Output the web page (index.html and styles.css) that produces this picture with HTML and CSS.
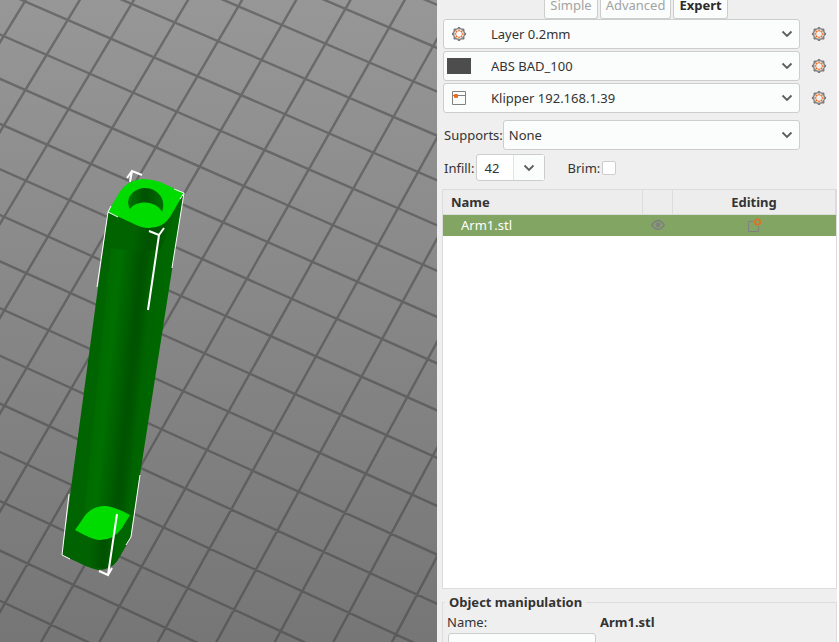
FILE: index.html
```html
<!DOCTYPE html>
<html lang="en">
<head>
<meta charset="utf-8">
<title>Plater</title>
<link rel="stylesheet" href="styles.css">
</head>
<body>
<svg class="symbols" aria-hidden="true">
  <symbol id="gear" viewBox="0 0 16 16">
    <g fill="none">
      <circle cx="8" cy="8" r="5.5" stroke="#8a8a8a" stroke-width="1.5"/>
      <circle cx="8" cy="8" r="6.3" stroke="#7c7c7c" stroke-width="1.6" pathLength="80" stroke-dasharray="5 5" stroke-dashoffset="2.5"/>
      <circle cx="8" cy="8" r="3.3" stroke="#f29a68" stroke-width="1"/>
      <circle cx="8" cy="8" r="3.6" stroke="#ed6b21" stroke-width="1.3" pathLength="80" stroke-dasharray="5 5" stroke-dashoffset="2.5"/>
    </g>
  </symbol>
  <symbol id="printer" viewBox="0 0 16 16">
    <path d="M1.5 1.5h13v13h-13zM1.5 5.5h13" fill="none" stroke="#808080"/>
    <rect x="3" y="4" width="4" height="4" rx="1" fill="#ed6b21"/>
  </symbol>
  <symbol id="chevron" viewBox="0 0 12 12">
    <path d="M1.5 3.5 6 8 10.5 3.5" fill="none" stroke="#5c5c5c" stroke-width="1.8"/>
  </symbol>
</svg>
<div class="app">
  <main class="viewport">
    <svg class="scene" viewBox="0 0 437 642" preserveAspectRatio="xMinYMin slice" role="img" aria-label="3D view of Arm1.stl">
      <defs>
        <linearGradient id="side" gradientUnits="userSpaceOnUse" x1="87" y1="380" x2="157" y2="387">
          <stop offset="0" stop-color="#006400"/><stop offset=".13" stop-color="#006400"/>
          <stop offset=".17" stop-color="#006c00"/><stop offset=".3" stop-color="#006f00"/>
          <stop offset=".6" stop-color="#005300"/><stop offset=".68" stop-color="#005700"/>
          <stop offset=".78" stop-color="#006400"/><stop offset="1" stop-color="#006800"/>
        </linearGradient>
        <linearGradient id="corner" gradientUnits="userSpaceOnUse" x1="108" y1="220" x2="184" y2="230">
          <stop offset="0" stop-color="#006300"/><stop offset=".35" stop-color="#006300"/>
          <stop offset=".55" stop-color="#005300"/><stop offset=".7" stop-color="#005700"/><stop offset=".85" stop-color="#006600"/>
          <stop offset="1" stop-color="#006a00"/>
        </linearGradient>
        <linearGradient id="base" gradientUnits="userSpaceOnUse" x1="64" y1="545" x2="131" y2="550">
          <stop offset="0" stop-color="#006200"/><stop offset=".4" stop-color="#006200"/>
          <stop offset=".6" stop-color="#005000"/><stop offset=".8" stop-color="#006600"/>
          <stop offset="1" stop-color="#006800"/>
        </linearGradient>
        <linearGradient id="bore" x1="0" x2="1">
          <stop offset="0" stop-color="#007500"/><stop offset=".5" stop-color="#005000"/><stop offset="1" stop-color="#007000"/>
        </linearGradient>
      </defs>
      <path id="bed-grid" class="bed-grid"/>
      <g class="box-edge">
        <path d="M127 178 132 171 142 175M132 171 130 182"/>
      </g>
      <path fill="url(#side)" d="M108 213 62 555 75 560Q88 568 98 570 110 570 117 561L130 539 184 193 150 200Z"/>
      <path fill="url(#corner)" d="M108 213 104 247 140 252 161 249 184 193 150 200Z"/>
      <path fill="url(#base)" d="M66 525 62 555 86 566Q99 571 110 567 115 565 119 558L130 538 134 514 129 516 75 530Z"/>
      <path fill="#00dc00" d="M108 212 119 193Q127 180 143 179 151 179 160 182L184 193 170 217Q163 228 149 228 141 228 132 223Z"/>
      <path fill="url(#bore)" d="M130 209C124 198 134 188 145 188 158 188 167 200 162 212 157 201 137 199 130 209Z"/>
      <path fill="#00dc00" d="M75 530 82 520Q90 506 105 506 113 506 130 515L122 528Q113 541 98 540 91 539 75 530Z"/>
      <g class="box-edge">
        <path d="M149 231 159 235 164 228M159 235 148 310"/>
        <path d="M117 514 108 575 99 571M108 575 112 568"/>
      </g>
      <g class="box-edge thin">
        <path d="M111 206 108 212 118 217M108 212 97 287"/>
        <path d="M174 189 184 193 180 199M184 193 172 268"/>
        <path d="M69 494 62 555 70 559M140 475 131 537 126 545"/>
      </g>
    </svg>
  </main>
  <aside class="panel">
    <nav class="modes" aria-label="Mode">
      <button type="button" class="mode">Simple</button>
      <button type="button" class="mode">Advanced</button>
      <button type="button" class="mode active">Expert</button>
    </nav>
    <div class="presets">
      <div class="preset">
        <div class="combo">
          <svg class="lead icon"><use href="#gear"/></svg>
          <select class="field" aria-label="Print settings"><option>Layer 0.2mm</option></select>
          <svg class="chevron"><use href="#chevron"/></svg>
        </div>
        <button type="button" class="edit" aria-label="Edit print settings"><svg class="icon"><use href="#gear"/></svg></button>
      </div>
      <div class="preset">
        <div class="combo">
          <span class="lead swatch"></span>
          <select class="field" aria-label="Filament"><option>ABS BAD_100</option></select>
          <svg class="chevron"><use href="#chevron"/></svg>
        </div>
        <button type="button" class="edit" aria-label="Edit filament"><svg class="icon"><use href="#gear"/></svg></button>
      </div>
      <div class="preset">
        <div class="combo">
          <svg class="lead icon"><use href="#printer"/></svg>
          <select class="field" aria-label="Printer"><option>Klipper 192.168.1.39</option></select>
          <svg class="chevron"><use href="#chevron"/></svg>
        </div>
        <button type="button" class="edit" aria-label="Edit printer"><svg class="icon"><use href="#gear"/></svg></button>
      </div>
    </div>
    <div class="row supports">
      <label for="supports">Supports:</label>
      <div class="combo plain">
        <select class="field" id="supports"><option>None</option></select>
        <svg class="chevron"><use href="#chevron"/></svg>
      </div>
    </div>
    <div class="row infill">
      <label for="infill">Infill:</label>
      <div class="spin">
        <input id="infill" type="text" value="42">
        <button type="button" aria-label="Infill values"><svg class="spin-chevron"><use href="#chevron"/></svg></button>
      </div>
      <label class="brim-label" for="brim">Brim:</label>
      <input class="check" id="brim" type="checkbox">
    </div>
    <div class="objects">
      <table>
        <colgroup><col><col class="col-eye"><col class="col-edit"></colgroup>
        <thead>
          <tr><th class="name">Name</th><th aria-label="Visible"></th><th>Editing</th></tr>
        </thead>
        <tbody>
          <tr>
            <td class="name">Arm1.stl</td>
            <td><svg class="icon" viewBox="0 0 16 16"><path d="M1.8 8Q8-.6 14.2 8 8 16.6 1.8 8Z" fill="none" stroke="#808080" stroke-width="1.7"/><circle cx="8" cy="8" r="2.4" fill="#808080"/></svg></td>
            <td><svg class="icon" viewBox="0 0 16 16"><path d="M7 4.500H2.500V14.500H12.500V9" fill="none" stroke="#808080"/><circle cx="11.500" cy="5" r="2.700" fill="none" stroke="#e07028" stroke-width="1.800"/></svg></td>
          </tr>
        </tbody>
      </table>
    </div>
    <section class="manipulation">
      <fieldset>
        <legend>Object manipulation</legend>
        <div class="object-name"><span>Name:</span><strong>Arm1.stl</strong></div>
        <select class="coords" aria-label="Coordinates"><option></option></select>
      </fieldset>
    </section>
  </aside>
</div>
<script src="grid.js"></script>
</body>
</html>
```
FILE: styles.css
```css
* { box-sizing: border-box; }

body {
  margin: 0;
  background: #fff;
  color: #333;
  font: 13px/18px "Noto Sans", "Open Sans", sans-serif;
}

button, input, select { font: inherit; color: inherit; }
button { padding: 0; border: 0; background: none; }

.symbols { position: absolute; width: 0; height: 0; }

.app {
  display: grid;
  grid-template-columns: minmax(0, 1fr) 400px;
  height: 100vh;
  padding-right: 2px;
  overflow: hidden;
}

.viewport {
  min-height: 0;
  background: linear-gradient(#979797, #767676);
}

.scene { display: block; width: 100%; height: 100%; }
.bed-grid { fill: none; stroke: #404040; stroke-opacity: .5; stroke-width: 2.4; }
.box-edge { fill: none; stroke: #fff; stroke-width: 2; }
.thin { stroke-width: 1; }

.panel {
  display: flex;
  flex-direction: column;
  min-height: 0;
  padding-left: 5px;
  background: #efefef;
}

.modes {
  display: flex;
  flex: none;
  justify-content: center;
  gap: 2px;
  height: 19px;
  padding-right: 7px;
}

.mode {
  height: 19px;
  padding: 0 5px 8px;
  border: 1px solid #cdcdcd;
  border-top: 0;
  border-radius: 0 0 3px 3px;
  background: #fbfdfc;
  color: #a3a3a3;
  line-height: 10px;
}

.mode.active { color: #2b2b2b; font-weight: bold; }

.presets { display: grid; gap: 2px; padding-left: 1px; }
.preset { display: flex; align-items: center; }

.combo { position: relative; flex: 1; }

.field {
  display: block;
  width: 100%;
  height: 30px;
  padding: 0 30px 0 47px;
  border: 1px solid #cdcdcd;
  border-radius: 3px;
  background: #fbfdfc;
  appearance: none;
}

.plain .field { padding-left: 5px; }

.lead { position: absolute; top: 7px; left: 8px; }
.swatch { left: 4px; width: 24px; height: 16px; background: #4d4d4d; }
.icon { display: block; width: 16px; height: 16px; }
.chevron { position: absolute; top: 9px; right: 7px; width: 12px; height: 12px; pointer-events: none; }
.edit { display: grid; flex: none; place-items: center; width: 37px; height: 30px; }

.row { display: flex; align-items: center; padding-left: 2px; }
.supports { margin-top: 7px; padding-right: 37px; }
.infill { margin-top: 4px; }

.spin {
  display: flex;
  width: 69px;
  height: 27px;
  margin-left: 2px;
  border: 1px solid #cdcdcd;
  border-radius: 3px;
  background: #fff;
}

.spin input { width: 36px; padding: 0 0 0 7px; border: 0; background: none; }
.spin button { flex: 1; border-left: 1px solid #e4e4e4; background: #fbfdfc; }
.spin-chevron { display: block; width: 12px; height: 12px; margin: 0 auto; }
.brim-label { margin-left: 22px; }

.check {
  width: 14px;
  height: 14px;
  margin: 0 0 0 2px;
  border: 1px solid #cdcdcd;
  border-radius: 2px;
  background: #fff;
  appearance: none;
}

.objects {
  flex: 1;
  min-height: 0;
  margin-top: 8px;
  border: 1px solid #dcdcdc;
  background: #fff;
}

table { width: 100%; border-collapse: collapse; table-layout: fixed; }
.col-eye { width: 30px; }
.col-edit { width: 163px; }
th { height: 24px; padding: 0; border-right: 1px solid #dcdcdc; border-bottom: 1px solid #dcdcdc; background: #ededed; }
td { height: 22px; padding: 0; background: #82a564; color: #fff; }
td .icon { margin: 0 auto; }
.name { text-align: left; }
th.name { padding-left: 8px; }
td.name { padding-left: 18px; }

.manipulation { flex: none; height: 53px; padding-top: 4px; overflow: hidden; }
fieldset { min-width: 0; margin: 0; padding: 0 0 8px 4px; border: 1px solid #dcdcdc; }
legend { margin-left: -2px; padding: 0 4px; font-weight: bold; }
.object-name { display: grid; grid-template-columns: 153px 1fr; margin-top: 2px; }

.coords {
  display: block;
  width: 148px;
  height: 30px;
  margin: 2px 0 0 1px;
  border: 1px solid #cdcdcd;
  border-radius: 3px;
  background: #fbfdfc;
  appearance: none;
}
```
FILE: grid.js
```js
// Projects a bed coordinate (in grid cells) into the scene.
function project(a, b) {
  const w = 1 - 0.0025 * a - 0.0041 * b;
  const x = (67.7 + 42.75 * a - 21.29 * b) / w;
  const y = (20 + 18.57 * a + 34.66 * b) / w;
  return x.toFixed(1) + " " + y.toFixed(1);
}

const lines = [];
for (let i = -10; i <= 24; i++) {
  lines.push("M" + project(i, -10) + "L" + project(i, 24));
  lines.push("M" + project(-10, i) + "L" + project(24, i));
}
document.getElementById("bed-grid").setAttribute("d", lines.join(""));
```
